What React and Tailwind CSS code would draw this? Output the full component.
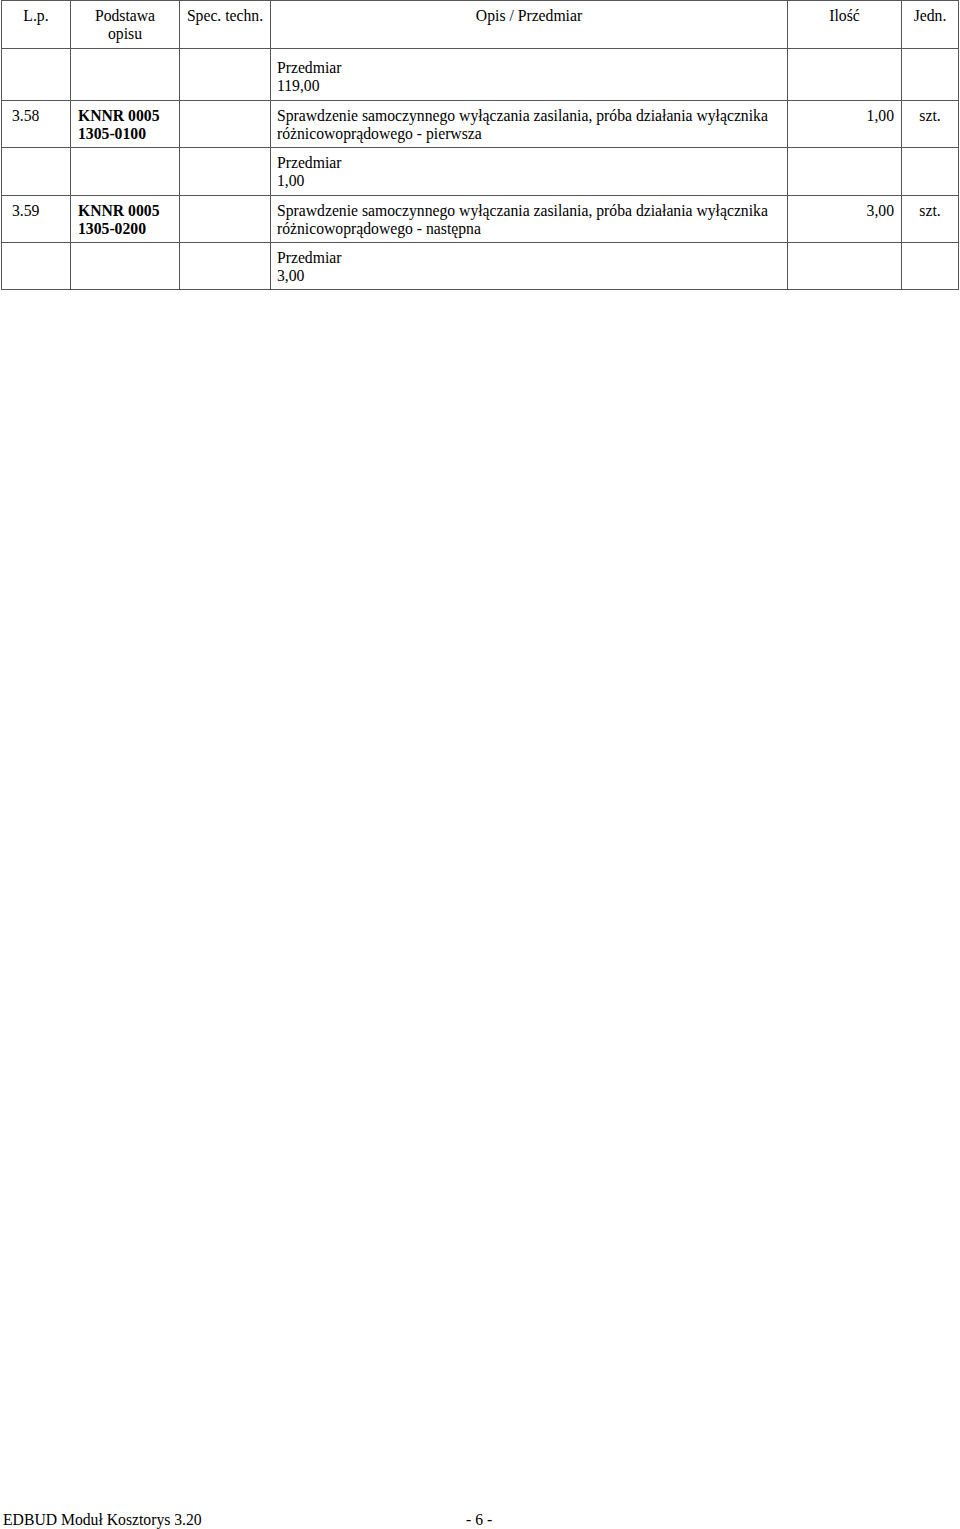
import React from "react";

const cell = "border border-[#555] align-top p-0";

const ROWS = [
    { h: "h-[52px]", kind: "qty", value: "119,00", pt: "pt-[10px]" },
    {
        h: "h-[47px]",
        kind: "item",
        lp: "3.58",
        base: ["KNNR 0005", "1305-0100"],
        desc: "Sprawdzenie samoczynnego wyłączania zasilania, próba działania wyłącznika różnicowoprądowego - pierwsza",
        qty: "1,00",
        unit: "szt.",
    },
    { h: "h-[48px]", kind: "qty", value: "1,00", pt: "pt-[6px]" },
    {
        h: "h-[47px]",
        kind: "item",
        lp: "3.59",
        base: ["KNNR 0005", "1305-0200"],
        desc: "Sprawdzenie samoczynnego wyłączania zasilania, próba działania wyłącznika różnicowoprądowego - następna",
        qty: "3,00",
        unit: "szt.",
    },
    { h: "h-[47px]", kind: "qty", value: "3,00", pt: "pt-[6px]" },
];

export default function App() {
    return (
        <div
            className="min-h-[1529px] w-[960px] bg-white text-black flex flex-col text-[15.7px] leading-[18px]"
            style={{ fontFamily: '"Liberation Serif", "Times New Roman", serif' }}
        >
            <table className="table-fixed border-collapse w-[958px] ml-[1px]">
                <colgroup>
                    <col className="w-[69px]" />
                    <col className="w-[109px]" />
                    <col className="w-[91px]" />
                    <col className="w-[517px]" />
                    <col className="w-[114px]" />
                    <col className="w-[57px]" />
                </colgroup>
                <thead>
                    <tr className="h-[48px]">
                        {["L.p.", "Podstawa opisu", "Spec. techn.", "Opis / Przedmiar", "Ilość", "Jedn."].map((t) => (
                            <th key={t} className={`${cell} font-normal text-center pt-[6px] px-[2px]`}>
                                {t === "Podstawa opisu" ? (
                                    <>
                                        Podstawa
                                        <br />
                                        opisu
                                    </>
                                ) : (
                                    t
                                )}
                            </th>
                        ))}
                    </tr>
                </thead>
                <tbody>
                    {ROWS.map((r, i) =>
                        r.kind === "qty" ? (
                            <tr key={i} className={r.h}>
                                <td className={cell} />
                                <td className={cell} />
                                <td className={cell} />
                                <td className={`${cell} ${r.pt} pl-[6px]`}>
                                    Przedmiar
                                    <br />
                                    {r.value}
                                </td>
                                <td className={cell} />
                                <td className={cell} />
                            </tr>
                        ) : (
                            <tr key={i} className={r.h}>
                                <td className={`${cell} pt-[6px] pl-[10px]`}>{r.lp}</td>
                                <td className={`${cell} pt-[6px] pl-[7px] font-bold`}>
                                    {r.base[0]}
                                    <br />
                                    {r.base[1]}
                                </td>
                                <td className={cell} />
                                <td className={`${cell} pt-[6px] pl-[6px] pr-[4px]`}>{r.desc}</td>
                                <td className={`${cell} pt-[6px] pr-[7px] text-right`}>{r.qty}</td>
                                <td className={`${cell} pt-[6px] text-center`}>{r.unit}</td>
                            </tr>
                        )
                    )}
                </tbody>
            </table>

            <div className="flex-1" />

            <footer className="flex items-end text-[15.7px] leading-[18px]">
                <span className="pl-[3px] w-[466px]">EDBUD Moduł Kosztorys 3.20</span>
                <span>- 6 -</span>
            </footer>
        </div>
    );
}
